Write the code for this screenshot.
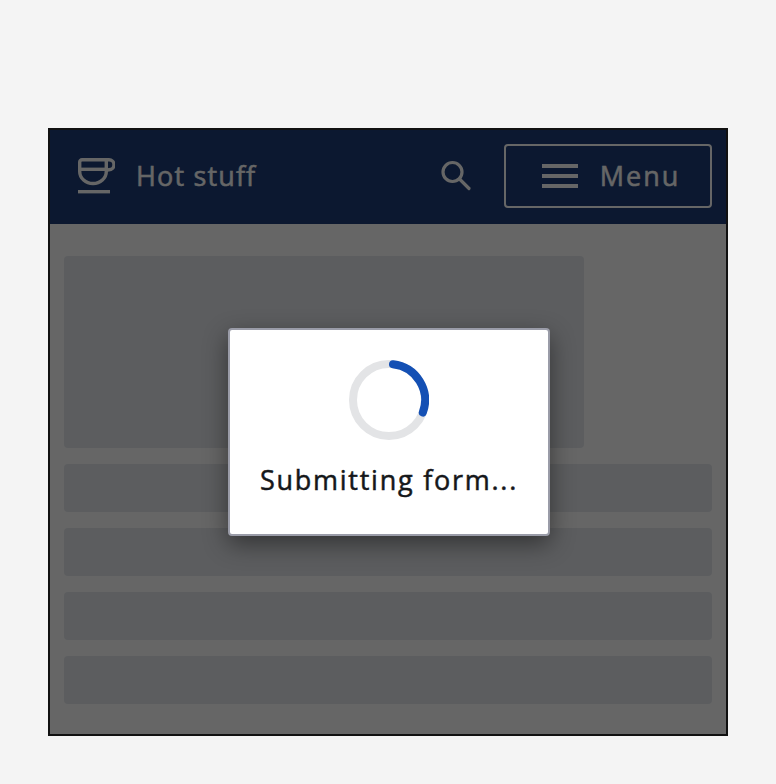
<style>
  :global(body) { margin: 0; background: #f4f4f4; font-family: "Open Sans", sans-serif; }
  .page { padding: 128px 48px 48px; }
  .frame { position: relative; width: 676px; height: 606px; border: 2px solid #111; border-top-width: 0; background: #fff; }
  .bar { height: 96px; background: #1e3d78; display: flex; align-items: center; padding: 0 14px 0 28px; }
  .logo { display: block; width: 37px; height: 36px; }
  .brand { margin: -2px 0 0 21px; font-size: 27px; font-weight: 400; -webkit-text-stroke: 0.5px currentColor; color: #fff; letter-spacing: 1.15px; flex: 1; }
  .search { display: block; width: 32px; height: 32px; margin-right: 32px; }
  .menu { box-sizing: border-box; width: 208px; height: 64px; border: 2px solid #fff; border-radius: 4px; display: flex; align-items: center; justify-content: center; gap: 22px; padding-left: 6px; color: #fff; font-size: 27px; font-weight: 400; -webkit-text-stroke: 0.5px currentColor; letter-spacing: 2px; }
  .menu span { margin-top: -2px; }
  .lines { display: block; width: 36px; height: 24px; }
  .content { padding: 32px 14px 0; display: flex; flex-direction: column; gap: 16px; }
  .hero { width: 520px; height: 192px; background: #e6e9ee; border-radius: 4px; }
  .row { height: 48px; background: #e6e9ee; border-radius: 4px; }
  .scrim { position: absolute; inset: 0; background: rgba(0,0,0,.6); box-shadow: inset 0 2px 0 #111; }
  .dialog { position: absolute; left: 178px; top: 200px; width: 322px; height: 208px; box-sizing: border-box; background: #fff; border: 2px solid #9a9ca8; border-radius: 4px; box-shadow: 0 8px 24px rgba(0,0,0,.45); display: flex; flex-direction: column; align-items: center; padding-top: 30px; }
  .spin { display: block; width: 80px; height: 80px; }
  .label { margin-top: 21px; font-size: 27px; font-weight: 400; -webkit-text-stroke: 0.5px currentColor; letter-spacing: 1.75px; color: #15171a; white-space: nowrap; }
</style>

<div class="page">
  <div class="frame">
    <div class="bar">
      <svg class="logo" viewBox="0 0 37 36" fill="none" stroke="#fff" stroke-width="3.4">
        <path d="M1.7 4A2.3 2.3 0 0 1 4 1.7H28.3V13.5A13.3 12 0 0 1 1.7 13.5Z" />
        <path d="M1.7 11.3H28.3" />
        <path d="M28.3 1.7H31A5 5 0 0 1 31 11.7L28 12.5" />
        <path d="M0 33.7H32" />
      </svg>
      <span class="brand">Hot stuff</span>
      <svg class="search" viewBox="0 0 32 32" fill="none" stroke="#fff" stroke-width="3.2">
        <circle cx="12.5" cy="12" r="9.5" />
        <path d="M19.5 19L29 28.5" stroke-linecap="round" />
      </svg>
      <div class="menu">
        <svg class="lines" viewBox="0 0 36 24" fill="#fff">
          <rect y="0" width="36" height="4" />
          <rect y="10" width="36" height="4" />
          <rect y="20" width="36" height="4" />
        </svg>
        <span>Menu</span>
      </div>
    </div>
    <div class="content">
      <div class="hero"></div>
      <div class="row"></div>
      <div class="row"></div>
      <div class="row"></div>
      <div class="row"></div>
    </div>
    <div class="scrim"></div>
    <div class="dialog">
      <svg class="spin" viewBox="0 0 80 80" fill="none" stroke-width="8">
        <circle cx="40" cy="40" r="36" stroke="#e3e4e6" />
        <path d="M44 4.2A36 36 0 0 1 73.8 52.5" stroke="#1450b4" stroke-linecap="round" />
      </svg>
      <div class="label">Submitting form...</div>
    </div>
  </div>
</div>
